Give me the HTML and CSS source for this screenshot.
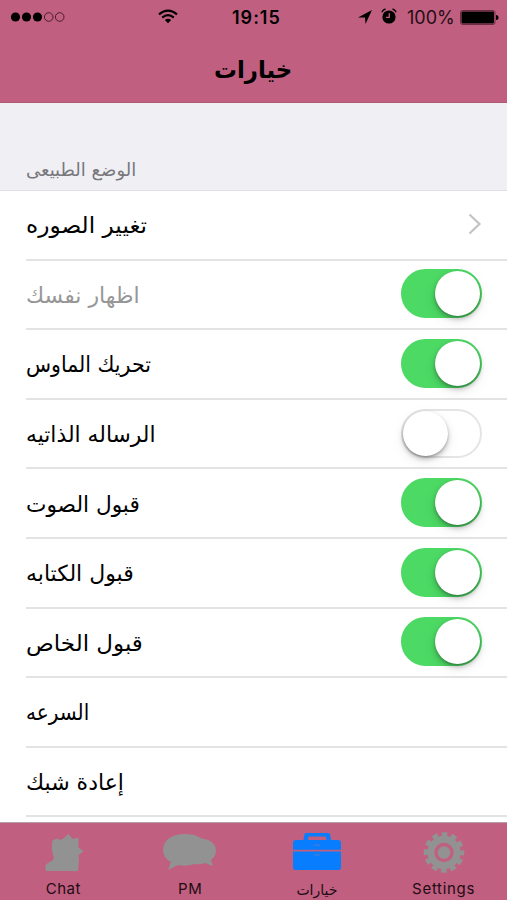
FILE: index.html
```html
<!DOCTYPE html>
<html lang="ar">
<head>
<meta charset="utf-8">
<title>خيارات</title>
<link rel="stylesheet" href="styles.css">
</head>
<body>
<div class="screen">
  <header class="top">
    <div class="status">
      <svg class="signal" width="56" height="12" viewBox="0 0 56 12"><g fill="#000"><circle cx="5.500" cy="6" r="4.600"/><circle cx="16.500" cy="6" r="4.600"/><circle cx="27.500" cy="6" r="4.600"/></g><g fill="none" stroke="#4b1c2f"><circle cx="38.700" cy="6" r="4.300"/><circle cx="49.700" cy="6" r="4.300"/></g></svg>
      <svg class="wifi" width="20" height="15" viewBox="0 0 20 15"><g fill="none" stroke="#000" stroke-width="2.200"><path d="M1 5.300Q10-2.200 19 5.300"/><path d="M4.200 8.600Q10 3.800 15.800 8.600"/></g><path d="M6.800 11Q10 8.400 13.200 11L10 14.200Z"/></svg>
      <span class="time">19:15</span>
      <svg class="locate" width="14" height="14" viewBox="0 0 14 14"><path d="M0 7.600L14 0L7.500 14L7 7.600Z"/></svg>
      <svg class="alarm" width="16" height="16" viewBox="0 0 16 16"><circle cx="8" cy="9" r="6.600"/><g fill="none" stroke="#000" stroke-width="1.300"><path d="M.8 4.300Q2 1.600 4.500 1M11.500 1Q14 1.600 15.200 4.300"/></g><path d="M8.300 5.300V9.300H5" fill="none" stroke="#c05f7f" stroke-width="1.300"/></svg>
      <span class="percent">100%</span>
      <svg class="battery" width="39" height="15" viewBox="0 0 39 15"><rect x=".5" y=".5" width="34.500" height="14" rx="2" fill="none" stroke="#6b2c44"/><rect x="1.500" y="1.500" width="32.500" height="12" rx="1"/><path d="M36 5Q38.500 5 38.500 7.500T36 10Z"/></svg>
    </div>
    <h1 class="title"><span>خيارات</span></h1>
  </header>
  <main>
    <div class="section"><span>الوضع الطبيعى</span></div>
    <ul class="list">
      <li class="row"><span class="label w1">تغيير الصوره</span><svg class="chevron" width="14" height="22" viewBox="0 0 14 22"><path d="M1.500 1.500L11.500 11L1.500 20.500" fill="none" stroke="#c3c3c7" stroke-width="2.200"/></svg></li>
      <li class="row"><span class="label dim">اظهار نفسك</span><i class="switch on"></i></li>
      <li class="row"><span class="label w3">تحريك الماوس</span><i class="switch on"></i></li>
      <li class="row"><span class="label w4">الرساله الذاتيه</span><i class="switch"></i></li>
      <li class="row"><span class="label w5">قبول الصوت</span><i class="switch on"></i></li>
      <li class="row"><span class="label">قبول الكتابه</span><i class="switch on"></i></li>
      <li class="row"><span class="label w7">قبول الخاص</span><i class="switch on"></i></li>
      <li class="row"><span class="label w8">السرعه</span></li>
      <li class="row"><span class="label">إعادة شبك</span></li>
    </ul>
  </main>
  <nav class="tabs">
    <div class="tab"><svg width="54" height="42" viewBox="0 0 54 42"><path fill="#929292" d="M10 40Q8.500 37 10 33.500Q12 31 16 30L18 27L16 20Q15.500 14 16.500 9.500L21 7.500L24.500 9L28 7L32.500 3L36.500 8L42.500 6.500L42.300 16L47.500 20.500L42.500 24L43 29L42 39.500Q40 40.500 36 40H10Z"/></svg><span>Chat</span></div>
    <div class="tab"><svg width="54" height="42" viewBox="0 0 54 42"><path fill="#929292" d="M22 3C34 3 38 8 41 8C49 9 53 14 53 20Q53 25 48 29L50 35L42 32Q37 34 31 33Q23 36 15 34L5 39L8 31C-2 26-2 14 5 8Q12 3 22 3Z"/></svg><span>PM</span></div>
    <div class="tab"><svg width="54" height="42" viewBox="0 0 54 42"><g fill="#087eff"><path fill-rule="evenodd" d="M13.500 9L14.500 3Q15 2 16.500 2H37.500Q39.500 2 40 3L41 9H48Q51 9 51 12V18.700H3V12Q3 9 6 9ZM18 9H36.500L36 5.500H18.500Z"/><path d="M3 20.500H51V36.500Q51 39 48 39H6Q3 39 3 36.500Z"/></g><path d="M24 14.500Q27 13 30 14.500M24 23.500Q27 25 30 23.500" fill="none" stroke="#527ccc"/></svg><span class="t-tab">خيارات</span></div>
    <div class="tab"><svg width="54" height="42" viewBox="0 0 54 42"><g fill="none" stroke="#929292"><circle cx="27" cy="21.500" r="13.200" stroke-width="7"/><circle cx="27" cy="21.500" r="17.800" stroke-width="5" stroke-dasharray="5.600 3.720" stroke-dashoffset="2.800"/></g><circle cx="27" cy="21.500" r="6.300" fill="#929292"/></svg><span class="wide">Settings</span></div>
  </nav>
</div>
</body>
</html>
```
FILE: styles.css
```css
* { box-sizing: border-box; }
body { margin: 0; background: #fff; font-family: Inter, "DejaVu Sans", sans-serif; color: #000; }
.screen { width: 507px; height: 900px; display: flex; flex-direction: column; overflow: hidden; }
.top { height: 103px; flex: none; background: #c05f7f; border-bottom: 1px solid #b05a76; }
.status { height: 34px; display: flex; align-items: center; padding-left: 10px; }
.status svg { flex: none; }
.wifi { margin-left: 92px; margin-top: -2px; }
.time { margin-left: 54px; width: 52px; font-size: 18px; font-weight: 600; letter-spacing: 1px; white-space: nowrap; }
.locate { margin-left: 74px; }
.alarm { margin-left: 9px; margin-top: -2px; }
.percent { margin-left: 10px; width: 48px; font-size: 18px; color: #260d17; white-space: nowrap; }
.battery { margin-left: 5px; }
.title { margin: 0; padding-top: 2px; height: 69px; font: bold 24px/69px "DejaVu Sans", sans-serif; text-align: center; direction: rtl; }
.title span { display: inline-block; transform: scaleX(.95); }
main { flex: 1; min-height: 0; overflow: hidden; }
.section { height: 88px; padding: 47px 0 0 26px; background: #efeff4; border-bottom: 1px solid #e0e0e4; color: #77777c; font: 18px/40px "DejaVu Sans", sans-serif; }
.list { margin: 0; padding: 0 0 0 26px; list-style: none; }
.row { height: 69.6px; display: flex; align-items: center; justify-content: space-between; padding: 0 25px 1px 0; border-bottom: 2px solid #e2e3e3; }
.label { padding-top: 4px; font: 22px/40px "DejaVu Sans", sans-serif; white-space: nowrap; direction: rtl; transform-origin: left center; }
.w1 { transform: scaleX(1.057); }
.w3 { transform: scaleX(.933); }
.w4 { transform: scaleX(.992); }
.w5 { transform: scaleX(.985); }
.w7 { transform: scaleX(1.045); }
.w8 { transform: scaleX(.91); }
.dim { color: #979797; }
.switch { width: 81px; height: 49px; border-radius: 25px; background: #fff; border: 2px solid #e5e5e5; display: flex; }
.switch::before { content: ""; width: 45px; height: 45px; border-radius: 50%; background: #fff; box-shadow: 0 3px 5px rgba(0,0,0,.25), 0 1px 2px rgba(0,0,0,.2), 0 5px 14px rgba(0,0,0,.08); }
.switch.on { background: #4cd964; border-color: #4cd964; justify-content: flex-end; }
.tabs { height: 78px; flex: none; display: flex; background: #c05f7f; border-top: 1px solid #b4a0a7; }
.tab { flex: 1; display: flex; flex-direction: column; align-items: center; padding-top: 8px; font-size: 15px; line-height: 18px; color: #220b14; letter-spacing: .5px; }
.tab svg { margin-bottom: 7px; flex: none; }
.wide { letter-spacing: .7px; }
.t-tab { padding-top: 1px; font-family: "DejaVu Sans", sans-serif; font-size: 14px; letter-spacing: 0; }
```
